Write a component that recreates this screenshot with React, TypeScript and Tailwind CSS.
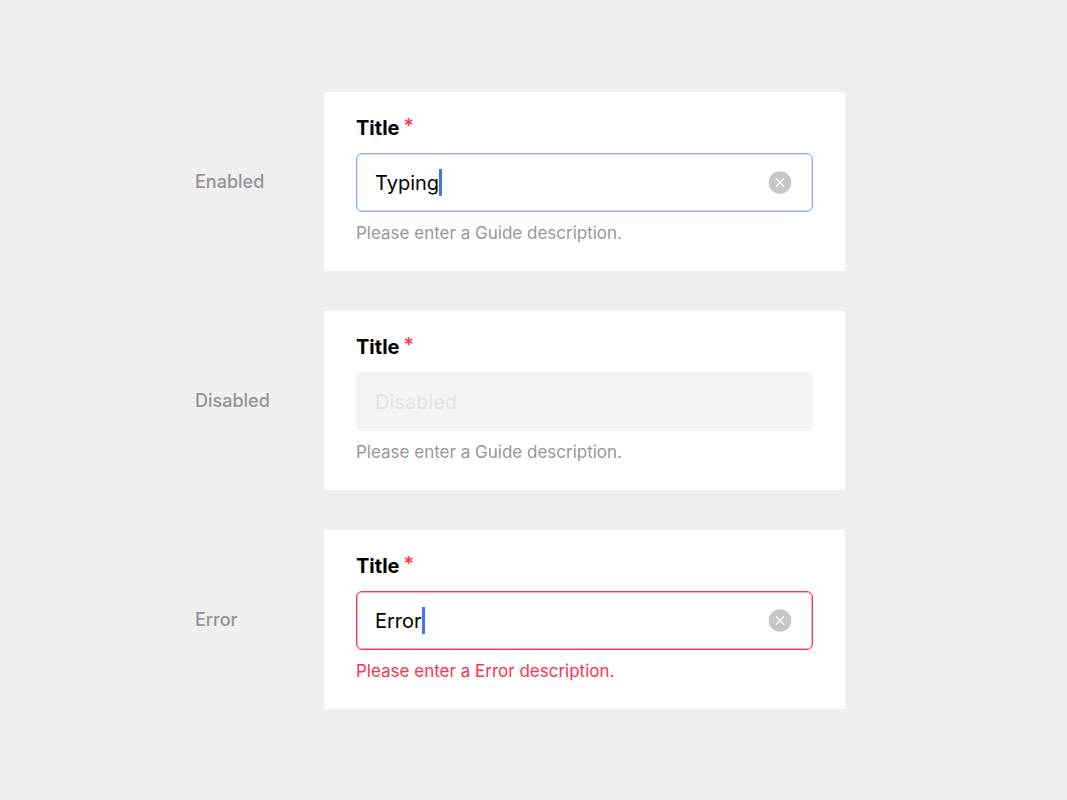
import { useState } from "react";
import clsx from "clsx";

type FieldState = "enabled" | "disabled" | "error";

const rows: { label: string; state: FieldState; value: string; description: string }[] = [
    { label: "Enabled", state: "enabled", value: "Typing", description: "Please enter a Guide description." },
    { label: "Disabled", state: "disabled", value: "Disabled", description: "Please enter a Guide description." },
    { label: "Error", state: "error", value: "Error", description: "Please enter a Error description." },
];

function ClearIcon() {
    return (
        <svg className="block size-6" viewBox="0 0 24 24" fill="none" aria-hidden="true">
            <circle cx="12" cy="12.5" r="11.3" fill="#c6c6c6" />
            <path d="M8.3 8.8l7.4 7.4M15.7 8.8l-7.4 7.4" stroke="#fff" strokeWidth="1.3" strokeLinecap="round" />
        </svg>
    );
}

function TextField({ id, state, initialValue, description }: { id: string; state: FieldState; initialValue: string; description: string }) {
    const [value, setValue] = useState(initialValue);
    const disabled = state === "disabled";

    return (
        <div className="min-w-0 flex-1 bg-white px-8 pt-6 pb-[26px]">
            <label htmlFor={id} className="flex items-start gap-1 text-xl leading-6 font-bold text-black">
                Title
                <span className="leading-5 font-medium text-[#ff3250]">*</span>
            </label>
            <div
                className={clsx(
                    "mt-[13px] flex h-[59px] items-center rounded-md border pr-5 pl-[18px]",
                    state === "enabled" && "border-[#92acfb] ring-1 ring-[#92acfb]/40 ring-inset",
                    disabled && "border-[#f4f4f4] bg-[#f4f4f4]",
                    state === "error" && "border-[#ff3250] ring-1 ring-[#ff3250]/40 ring-inset"
                )}
            >
                <input
                    id={id}
                    type="text"
                    required
                    disabled={disabled}
                    value={value}
                    onChange={(e) => setValue(e.target.value)}
                    aria-describedby={`${id}-description`}
                    aria-invalid={state === "error"}
                    className="field-sizing-content max-w-full pt-0.5 text-xl leading-7 text-black caret-transparent outline-none disabled:text-[#e4e2e3]"
                />
                {!disabled && (
                    <>
                        <span className="h-[27px] w-[3px] shrink-0 bg-[#4473f3]" />
                        <button type="button" aria-label="Clear" className="ml-auto shrink-0" onClick={() => setValue("")}>
                            <ClearIcon />
                        </button>
                    </>
                )}
            </div>
            <p
                id={`${id}-description`}
                className={clsx("mt-[9px] text-[17px] leading-6", state === "error" ? "text-[#ff3250]" : "text-[#979797]")}
            >
                {description}
            </p>
        </div>
    );
}

export default function App() {
    return (
        <main className="flex min-h-screen flex-col justify-center gap-10 bg-[#efeff1] py-10 pr-[222px] pl-[195px] font-['Inter',sans-serif]">
            {rows.map((row) => (
                <section key={row.state} className="flex items-center">
                    <h2 className="w-[129px] shrink-0 pt-0.5 text-lg leading-6 font-medium text-[#949494]">{row.label}</h2>
                    <TextField id={row.state} state={row.state} initialValue={row.value} description={row.description} />
                </section>
            ))}
        </main>
    );
}
